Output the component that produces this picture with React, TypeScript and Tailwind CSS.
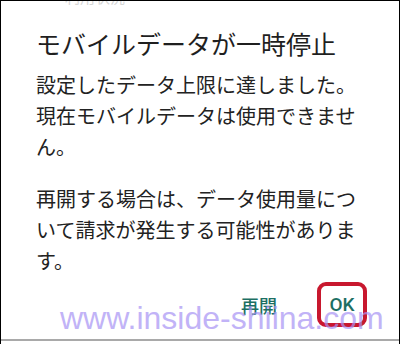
import React from "react";

export default function App() {
  return (
    <div className="relative w-[400px] h-[344px] overflow-hidden bg-white border-t border-l border-r border-black flex flex-col" style={{ fontFamily: '"Noto Sans CJK JP", "Noto Sans", sans-serif' }}>
      <div className="h-[4px] overflow-hidden pl-[64px]">
        <div className="-mt-[12px] text-[15px] leading-[16px] text-[#b0b0b0] opacity-50">利用状況</div>
      </div>
      <div className="flex-1 flex flex-col pl-[35px] pr-[30px]">
        <div className="mt-[24px] text-[25px] leading-[28px] text-[#1f1f1f]">モバイルデータが一時停止</div>
        <div className="mt-[12px] w-[330px] text-[20px] leading-[31px] text-[#222222]">
          設定したデータ上限に達しました。現在モバイルデータは使用できません。
        </div>
        <div className="mt-[21px] w-[330px] text-[20px] leading-[31px] text-[#222222]">
          再開する場合は、データ使用量について請求が発生する可能性があります。
        </div>
        <div className="mt-[6px] flex items-center justify-end pr-[2px]">
          <div className="text-[18px] leading-[20px] font-medium text-[#1d6f63] mr-[40px]">再開</div>
          <div className="w-[50px] h-[45px] rounded-[9px] border-[4px] border-[#c8182e] flex items-center justify-center">
            <span className="text-[19px] leading-[20px] font-medium text-[#1d6f63]" style={{ fontFamily: 'Roboto, "Noto Sans", sans-serif' }}>OK</span>
          </div>
        </div>
      </div>
      <div className="h-[2px] bg-[#a9a9a9] mb-[3px]"></div>
      <div className="absolute left-[59px] top-[299px] text-[32px] leading-[36px] text-[#a893f4] opacity-70 whitespace-nowrap pointer-events-none" style={{ fontFamily: '"Liberation Sans", Arial, sans-serif' }}>
        www.inside-shiina.com
      </div>
    </div>
  );
}
